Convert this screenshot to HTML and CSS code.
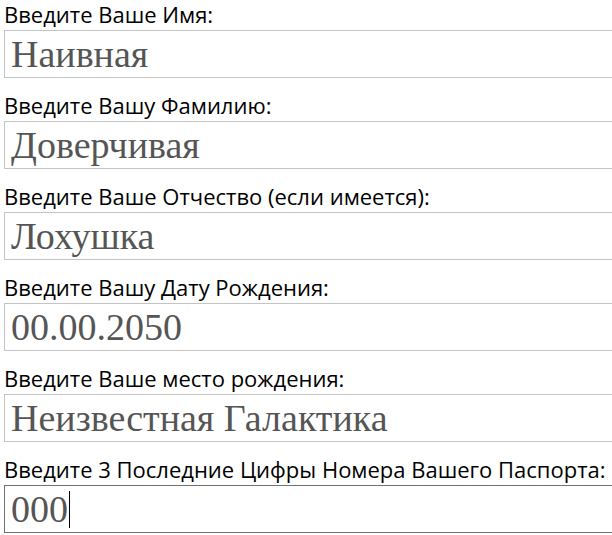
FILE: index.html
```html
<!DOCTYPE html>
<html lang="ru">
<head>
<meta charset="utf-8">
<title>Анкета</title>
<link rel="stylesheet" href="styles.css">
</head>
<body>
<form class="form">
  <div class="row">
    <label class="label" for="f1">Введите Ваше Имя:</label>
    <input class="field" id="f1" type="text" value="Наивная">
  </div>
  <div class="row">
    <label class="label" for="f2">Введите Вашу Фамилию:</label>
    <input class="field" id="f2" type="text" value="Доверчивая">
  </div>
  <div class="row">
    <label class="label" for="f3">Введите Ваше Отчество (если имеется):</label>
    <input class="field" id="f3" type="text" value="Лохушка">
  </div>
  <div class="row">
    <label class="label" for="f4">Введите Вашу Дату Рождения:</label>
    <input class="field" id="f4" type="text" value="00.00.2050">
  </div>
  <div class="row">
    <label class="label" for="f5">Введите Ваше место рождения:</label>
    <input class="field" id="f5" type="text" value="Неизвестная Галактика">
  </div>
  <div class="row">
    <label class="label" for="f6">Введите 3 Последние Цифры Номера Вашего Паспорта:</label>
    <div class="field field-focus" id="f6" role="textbox"><span class="value">000</span><span class="caret"></span></div>
  </div>
</form>
</body>
</html>
```

FILE: styles.css
```css
html, body {
  margin: 0;
  padding: 0;
  background: #ffffff;
}
.form {
  display: flex;
  flex-direction: column;
  gap: 13px;
  padding: 0 0 0 4px;
  overflow: hidden;
}
.row {
  display: flex;
  flex-direction: column;
  gap: 2px;
}
.label {
  font-family: "Open Sans", "Noto Sans", sans-serif;
  font-size: 22px;
  line-height: 28px;
  color: #000;
  white-space: nowrap;
}
.field {
  box-sizing: border-box;
  width: 640px;
  height: 48px;
  margin: 0;
  padding: 0 6px;
  border: 1px solid #c4c4c4;
  border-radius: 0;
  background: #fff;
  font-family: "Liberation Serif", serif;
  font-size: 38px;
  color: #555555;
  outline: none;
  display: flex;
  align-items: center;
}
.field-focus {
  border-color: #707070;
}
.caret {
  display: inline-block;
  width: 1px;
  height: 37px;
  background: #000;
  margin-left: 1px;
}
```
